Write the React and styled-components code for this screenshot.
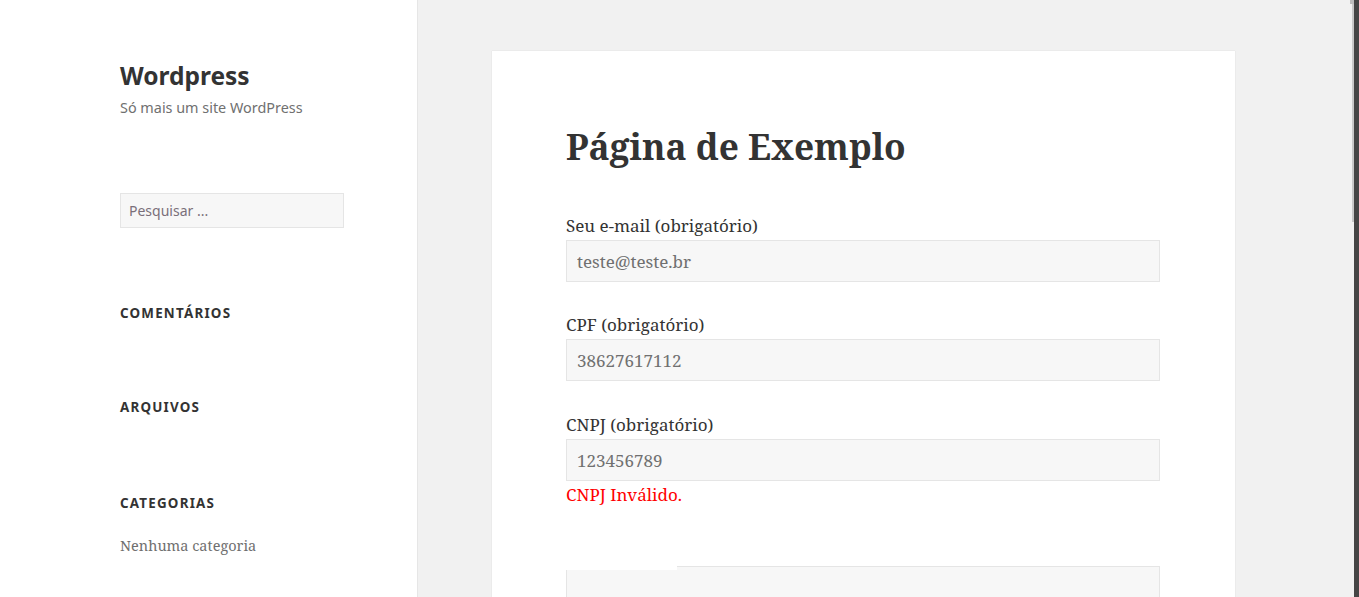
import React from "react"
import styled, { createGlobalStyle } from "styled-components"

const GlobalStyle = createGlobalStyle`
  html, body {
    margin: 0;
    padding: 0;
    background: #f1f1f1;
  }
  * {
    box-sizing: border-box;
  }
`

const serif = `"Noto Serif", "DejaVu Serif", Georgia, serif`
const sans = `"Noto Sans", "Open Sans", sans-serif`

const Page = styled.div`
  position: relative;
  display: flex;
  height: 597px;
  overflow: hidden;
  background: #f1f1f1;
  color: #333;
`

const Sidebar = styled.aside`
  width: 418px;
  flex-shrink: 0;
  background: #fff;
  border-right: 1px solid #e6e6e6;
  padding: 59px 73px 0 120px;
`

const SiteTitle = styled.h1`
  margin: 0;
  font-family: ${sans};
  font-size: 24.5px;
  line-height: 34px;
  font-weight: 700;
  color: #333;
`

const Tagline = styled.p`
  margin: 4px 0 0;
  font-family: ${sans};
  font-size: 14.4px;
  line-height: 21px;
  color: #707070;
`

const SearchField = styled.input`
  display: block;
  width: 224px;
  height: 35px;
  margin-top: 75px;
  padding: 0 8px;
  background: #f7f7f7;
  border: 1px solid #e5e5e5;
  font-family: ${sans};
  font-size: 14px;
  color: #707070;
  outline: none;
  &::placeholder {
    color: #7a6f7a;
  }
`

const Widget = styled.section`
  margin-top: ${({ $top }) => $top}px;
`

const WidgetTitle = styled.h2`
  margin: 0;
  font-family: ${sans};
  font-size: 13.4px;
  line-height: 20px;
  font-weight: 700;
  letter-spacing: 0.09em;
  text-transform: uppercase;
  color: #333;
`

const WidgetText = styled.p`
  margin: 22px 0 0;
  font-family: ${serif};
  font-size: 14.5px;
  line-height: 20px;
  color: #707070;
`

const Main = styled.main`
  flex: 1;
  padding: 51px 0 0 74px;
`

const Card = styled.article`
  width: 743px;
  min-height: 600px;
  background: #fff;
  box-shadow: 0 0 1px rgba(0, 0, 0, 0.15);
  padding: 71px 75px 0 74px;
  position: relative;
`

const EntryTitle = styled.h1`
  margin: 0 0 44px;
  font-family: ${serif};
  font-size: 35.3px;
  line-height: 48px;
  font-weight: 700;
  color: #333;
`

const Field = styled.div`
  margin-bottom: ${({ $gap }) => $gap}px;
`

const Label = styled.label`
  display: block;
  font-family: ${serif};
  font-size: 17px;
  line-height: 24px;
  color: #333;
`

const TextInput = styled.input`
  display: block;
  width: 100%;
  height: 42px;
  margin-top: 2px;
  padding: 0 10px;
  background: #f7f7f7;
  border: 1px solid #e5e5e5;
  font-family: ${serif};
  font-size: 17px;
  color: #707070;
  outline: none;
`

const ErrorText = styled.span`
  display: block;
  margin-top: 2px;
  font-family: ${serif};
  font-size: 17px;
  line-height: 24px;
  color: #f00;
`

const BlankBox = styled.div`
  position: relative;
  height: 42px;
  background: #f7f7f7;
  border: 1px solid #e5e5e5;
`

const BlankCover = styled.span`
  position: absolute;
  left: -1px;
  top: -1px;
  width: 111px;
  height: 4px;
  background: #fff;
`

const ScrollTrack = styled.div`
  position: absolute;
  top: 0;
  right: 0;
  width: 5px;
  height: 100%;
  background: #454545;
`

const ScrollThumb = styled.div`
  position: absolute;
  top: 4px;
  right: 5px;
  width: 2px;
  height: 218px;
  background: #c8c8c8;
`

const ScrollCap = styled.div`
  position: absolute;
  top: 0;
  right: 5px;
  width: 4px;
  height: 4px;
  background: #bdbdbd;
`

export default function App() {
  return (
    <>
      <GlobalStyle />
      <Page>
        <Sidebar>
          <SiteTitle>Wordpress</SiteTitle>
          <Tagline>Só mais um site WordPress</Tagline>
          <SearchField placeholder="Pesquisar ..." />
          <Widget $top={75}>
            <WidgetTitle>Comentários</WidgetTitle>
          </Widget>
          <Widget $top={74}>
            <WidgetTitle>Arquivos</WidgetTitle>
          </Widget>
          <Widget $top={76}>
            <WidgetTitle>Categorias</WidgetTitle>
            <WidgetText>Nenhuma categoria</WidgetText>
          </Widget>
        </Sidebar>
        <Main>
          <Card>
            <EntryTitle>Página de Exemplo</EntryTitle>
            <Field $gap={31}>
              <Label>Seu e-mail (obrigatório)</Label>
              <TextInput defaultValue="teste@teste.br" />
            </Field>
            <Field $gap={32}>
              <Label>CPF (obrigatório)</Label>
              <TextInput defaultValue="38627617112" />
            </Field>
            <Field $gap={59}>
              <Label>CNPJ (obrigatório)</Label>
              <TextInput defaultValue="123456789" />
              <ErrorText>CNPJ Inválido.</ErrorText>
            </Field>
            <BlankBox>
              <BlankCover />
            </BlankBox>
          </Card>
        </Main>
        <ScrollCap />
        <ScrollThumb />
        <ScrollTrack />
      </Page>
    </>
  )
}
